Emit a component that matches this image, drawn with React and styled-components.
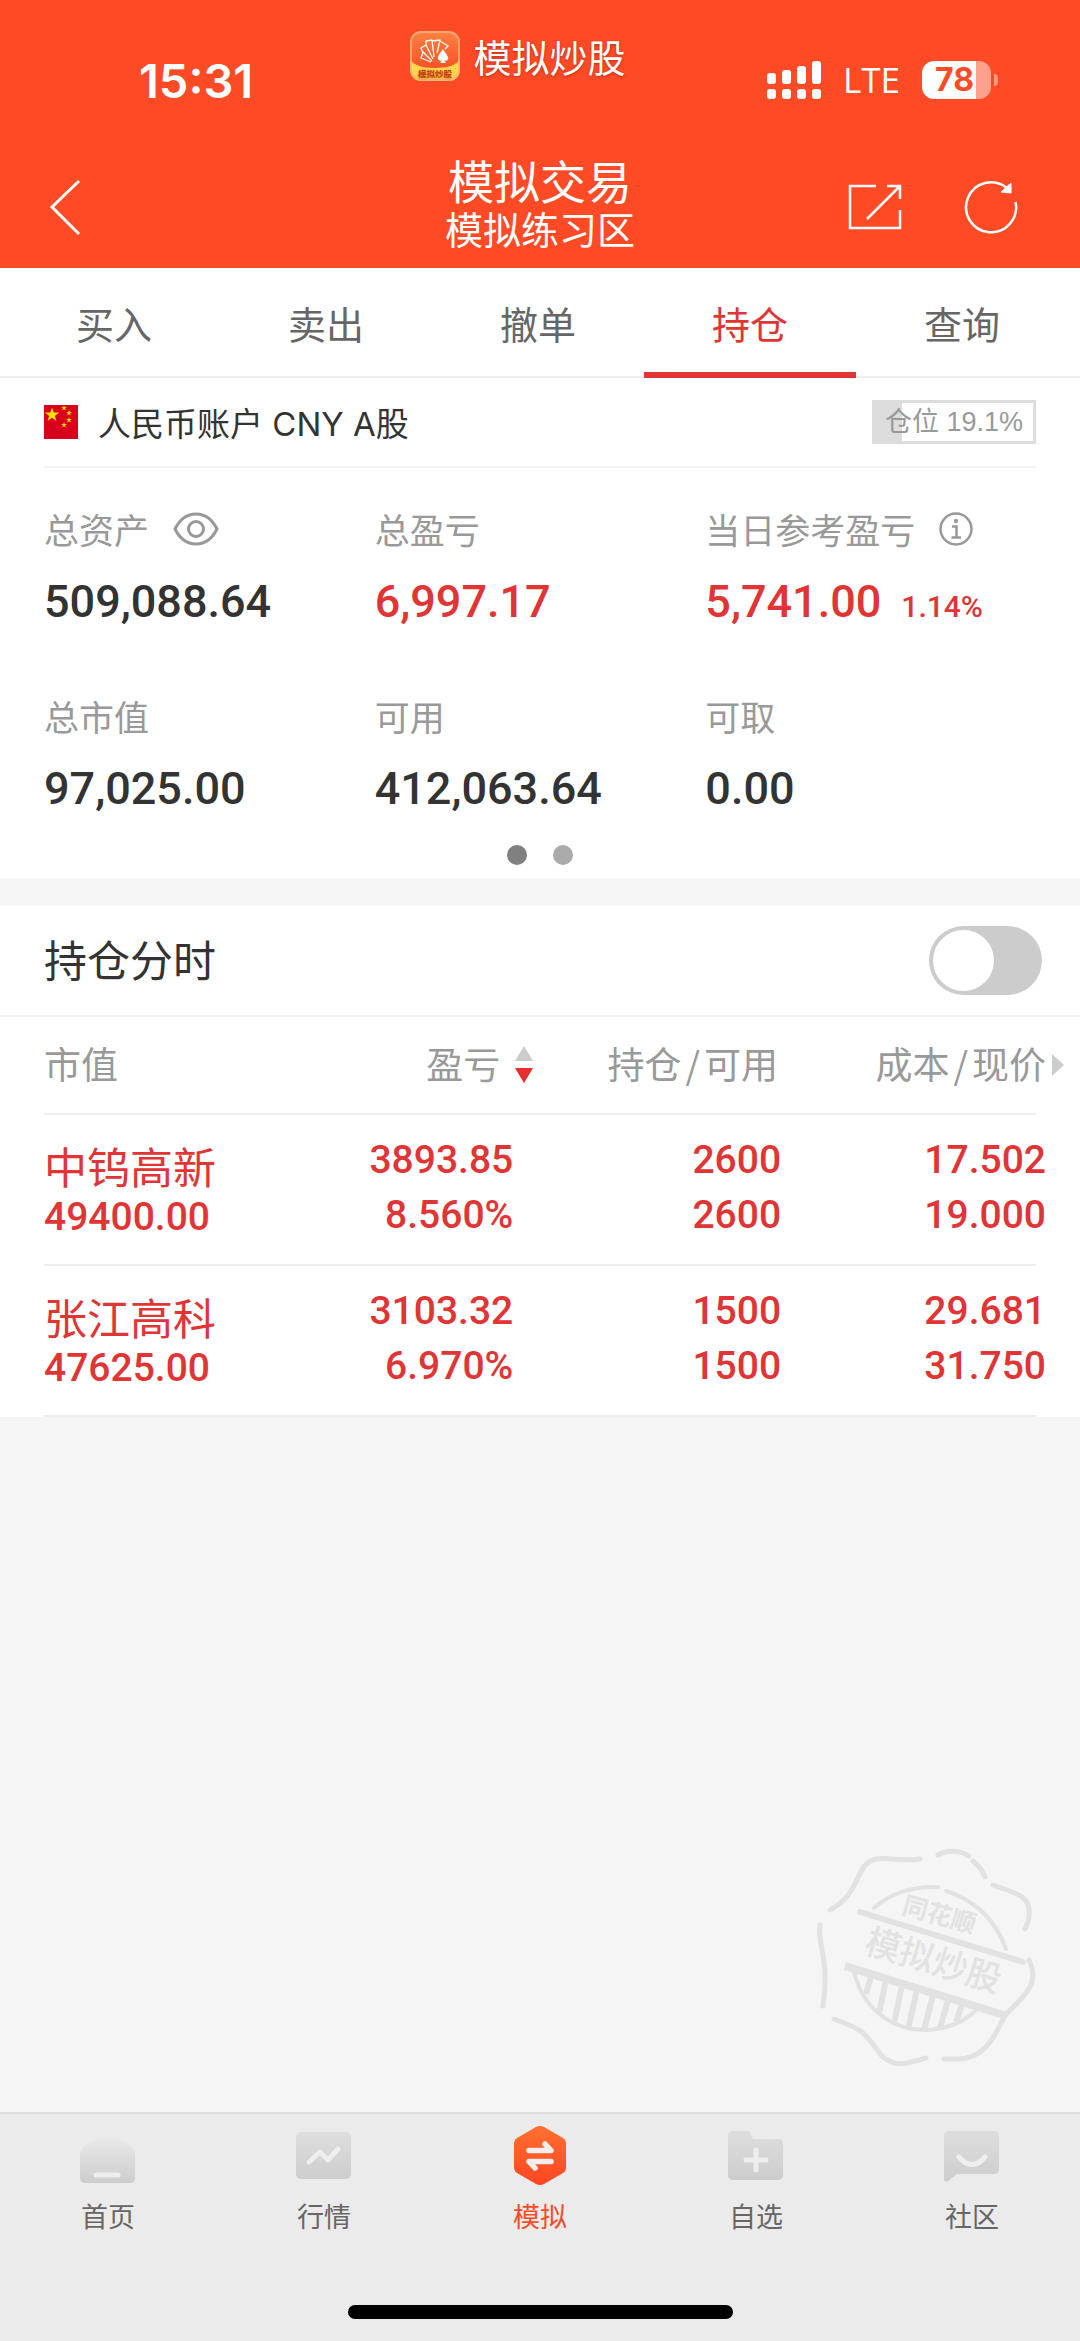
import React from "react";
import styled, { createGlobalStyle } from "styled-components";

const RED = "#e13434";
const BRAND = "#ff4a26";
const CJK = `"Noto Sans CJK SC", sans-serif`;

const GlobalStyle = createGlobalStyle`
  * { box-sizing: border-box; }
  body { margin: 0; background: #f5f5f5; font-family: "Liberation Sans", ${CJK}; color: #333; }
  button { appearance: none; border: 0; padding: 0; background: none; font: inherit; color: inherit; cursor: pointer; }
  svg { display: block; }
`;

const Screen = styled.div`
  min-height: 100vh;
  display: flex;
  flex-direction: column;
`;

const Header = styled.header`
  background: ${BRAND};
  color: #fff;
  padding: 0 46px;
`;

const StatusBar = styled.div`
  height: 140px;
  display: grid;
  grid-template-columns: 1fr auto 1fr;
`;

const Clock = styled.time`
  font: 600 47px/56px Inter, sans-serif;
  padding: 53px 0 0 93px;
`;

const AppBadge = styled.div`
  display: flex;
  align-items: center;
  gap: 13px;
  height: 52px;
  margin: 30px 44px 0 0;
  font: 400 38px/52px ${CJK};
  text-shadow: 0 1px 3px rgba(120, 20, 0, 0.5);
`;

const Signals = styled.div`
  display: flex;
  justify-content: flex-end;
  align-items: center;
  gap: 22px;
  height: 40px;
  margin-top: 60px;
  padding-right: 36px;
  font: 500 35px/40px "Open Sans", sans-serif;
`;

const Battery = styled.div`
  display: flex;
  align-items: center;
  gap: 3px;
  &::after {
    content: "";
    width: 4px;
    height: 12px;
    border-radius: 0 4px 4px 0;
    background: #ff9a85;
  }
`;

const BatteryLevel = styled.div`
  width: 69px;
  height: 38px;
  border-radius: 12px;
  background: linear-gradient(90deg, #fff 78%, #ffa18d 78%);
  color: ${BRAND};
  font: 700 32px/38px Inter, sans-serif;
  text-align: center;
  padding-right: 4px;
`;

const TitleBar = styled.div`
  height: 128px;
  padding-top: 6px;
  display: grid;
  grid-template-columns: 1fr auto 1fr;
  align-items: center;
`;

const Title = styled.h1`
  margin: 0;
  padding-top: 8px;
  font: 400 46px/50px ${CJK};
  text-align: center;
  align-self: start;
`;

const Subtitle = styled.div`
  font-size: 38px;
  line-height: 48px;
`;

const BackButton = styled.button`
  justify-self: start;
`;

const Actions = styled.div`
  display: flex;
  justify-content: flex-end;
  align-items: center;
  gap: 61px;
  padding-right: 15px;
`;

const Tabs = styled.nav`
  display: grid;
  grid-template-columns: repeat(5, 1fr);
  padding: 0 12px 0 8px;
  background: #fff;
  border-bottom: 2px solid #eee;
`;

const Tab = styled.button`
  height: 110px;
  margin-bottom: -2px;
  font: 400 38px/108px ${CJK};
  text-align: center;
  color: ${(p) => (p.$active ? RED : "#666")};
  box-shadow: ${(p) => (p.$active ? `inset 0 -6px ${RED}` : "none")};
`;

const Account = styled.section`
  background: #fff;
  padding: 0 44px;
`;

const AccountHead = styled.div`
  display: flex;
  align-items: center;
  height: 90px;
  border-bottom: 2px solid #f2f2f2;
`;

const AccountName = styled.h2`
  margin: 0 auto 0 20px;
  padding-top: 4px;
  font: 400 33px/48px Inter, ${CJK};
`;

const Position = styled.div`
  height: 44px;
  padding: 0 10px;
  border: 3px solid #ddd;
  background: linear-gradient(90deg, #ddd 17%, #fff 17%);
  color: #999;
  font: 400 27px/38px "Liberation Sans", ${CJK};
`;

const Stats = styled.dl`
  display: grid;
  grid-template-columns: repeat(3, 1fr);
  row-gap: 57px;
  margin: 0;
  padding-top: 37px;
`;

const StatLabel = styled.dt`
  display: flex;
  align-items: center;
  gap: 24px;
  height: 48px;
  font: 400 35px/48px ${CJK};
  color: #999;
  white-space: nowrap;
`;

const StatValue = styled.dd`
  margin: 21px 0 0;
  font: 500 45px/56px Roboto, sans-serif;
  color: ${(p) => (p.$up ? RED : "#333")};
  white-space: nowrap;
`;

const Percent = styled.span`
  margin-left: 20px;
  font-size: 30px;
`;

const Dots = styled.div`
  display: flex;
  justify-content: center;
  gap: 26px;
  padding: 28px 0 13px;
`;

const Dot = styled.span`
  width: 20px;
  height: 20px;
  border-radius: 50%;
  background: ${(p) => (p.$on ? "#808080" : "#aaa")};
`;

const Holdings = styled.section`
  margin-top: 28px;
  background: #fff;
`;

const SwitchRow = styled.label`
  display: flex;
  align-items: center;
  justify-content: space-between;
  height: 111px;
  padding: 0 38px 0 44px;
  border-bottom: 2px solid #f2f2f2;
  font: 400 43px/64px ${CJK};
`;

const SwitchText = styled.span`
  padding-bottom: 6px;
`;

const Switch = styled.input`
  appearance: none;
  width: 113px;
  height: 69px;
  margin: 0;
  padding: 4px;
  border-radius: 35px;
  background: #ccc;
  &::before {
    content: "";
    display: block;
    width: 61px;
    height: 61px;
    border-radius: 50%;
    background: #fff;
  }
  &:checked { background: ${RED}; }
  &:checked::before { margin-left: auto; }
`;

const TableWrap = styled.div`
  padding: 0 44px;
`;

const Table = styled.table`
  width: 100%;
  table-layout: fixed;
  border-collapse: collapse;
`;

const Row = styled.tr`
  border-bottom: 2px solid #eee;
`;

const Th = styled.th`
  height: 97px;
  padding: 0;
  font: 400 37px/54px ${CJK};
  color: #999;
  white-space: nowrap;
`;

const ThInner = styled.div`
  display: flex;
  align-items: center;
  justify-content: ${(p) => (p.$left ? "flex-start" : "flex-end")};
  gap: ${(p) => p.$gap || 0}px;
  margin-right: ${(p) => p.$out || 0}px;
`;

const ThText = styled.span`
  padding-bottom: 5px;
`;

const Slash = styled.span`
  padding: 0 4px;
`;

const Td = styled.td`
  height: 151px;
  padding: 18px 0 0;
  vertical-align: top;
  text-align: ${(p) => (p.$left ? "left" : "right")};
  font: 500 39px/55px Roboto, sans-serif;
  color: ${RED};
  white-space: nowrap;
`;

const Figures = styled.div`
  margin-right: ${(p) => p.$out || 0}px;
`;

const StockName = styled.div`
  padding-top: 6px;
  font: 400 43px/52px ${CJK};
`;

const StockValue = styled.div`
  line-height: 52px;
`;

const Blank = styled.div`
  flex: 1;
  display: flex;
  justify-content: flex-end;
  align-items: flex-end;
  padding: 0 40px 40px;
`;

const BottomNav = styled.nav`
  height: 229px;
  background: #ebebeb;
  border-top: 2px solid #ddd;
`;

const NavItems = styled.div`
  display: grid;
  grid-template-columns: repeat(5, 1fr);
`;

const NavItem = styled.button`
  display: flex;
  flex-direction: column;
  align-items: center;
  padding-top: 10px;
  gap: 8px;
  font: 400 27px/40px ${CJK};
  color: ${(p) => (p.$active ? BRAND : "#666")};
`;

const HomeIndicator = styled.div`
  width: 385px;
  height: 14px;
  margin: 69px auto 0;
  border-radius: 7px;
  background: #000;
`;

const AppIcon = () => (
  <svg width="50" height="50" viewBox="0 0 50 50">
    <defs>
      <clipPath id="appClip"><rect width="50" height="50" rx="11" /></clipPath>
      <linearGradient id="appFill" x1="0" y1="0" x2="0" y2="1">
        <stop offset="0" stopColor="#ff8243" /><stop offset="1" stopColor="#f4431c" />
      </linearGradient>
    </defs>
    <g clipPath="url(#appClip)">
      <rect width="50" height="50" fill="url(#appFill)" />
      <path d="M0 28Q5 37 25 37T50 28V50H0Z" fill="#ffd84a" />
      <rect x="1" y="1" width="48" height="48" rx="10" fill="none" stroke="#ffb27e" strokeWidth="2" opacity=".8" />
    </g>
    <g fill="none" stroke="#fff" strokeWidth="1.3" strokeLinejoin="round">
      <path d="M21 31L11 27L13 21L22 30M13 22L11 17L16 14L23 28M16 15L16 10L22 9L24 26M22 10L30 9L27 22M30 10L38 15L35 18" />
    </g>
    <path d="M33 18C31 22 27 24 28 28C29 30 31 30 32 29L30 32H36L34 29C36 31 39 29 38 26C37 23 34 21 33 18Z" fill="#fff" />
    <text x="25" y="46" textAnchor="middle" fontSize="8.5" fontWeight="700" fill="#c2380f" fontFamily="Noto Sans CJK SC">模拟炒股</text>
  </svg>
);

const SignalIcon = () => (
  <svg width="54" height="38" viewBox="0 0 54 38" fill="#fff">
    {[12, 9, 5, 0].map((y, i) => (
      <g key={y}>
        <rect x={i * 15} y={y} width="9" height={23 - y} rx="3" />
        <rect x={i * 15} y="28" width="9" height="10" rx="3" />
      </g>
    ))}
  </svg>
);

const BackIcon = () => (
  <svg width="36" height="60" viewBox="0 0 36 60" fill="none" stroke="#fff" strokeWidth="3">
    <path d="M33 4L6 30L33 57" />
  </svg>
);

const ShareIcon = () => (
  <svg width="54" height="46" viewBox="0 0 54 46" fill="none" stroke="#fff" strokeWidth="2.5">
    <path d="M28 2H2V44H52V26M39 2H52V15M52 2L19 35" />
  </svg>
);

const RefreshIcon = () => (
  <svg width="56" height="56" viewBox="0 0 56 56" fill="none" stroke="#fff" strokeWidth="2.5">
    <path d="M52.5 23A25 25 0 1 1 44 9" />
    <path d="M48 4L48 14L38 13Z" fill="#fff" strokeWidth="1" />
  </svg>
);

const STAR = "M0-5L1.2-1.6H4.8L1.9.6L3 4L0 1.9L-3 4L-1.9.6L-4.8-1.6H-1.2Z";
const FlagIcon = () => (
  <svg width="34" height="34" viewBox="0 0 34 34">
    <rect width="34" height="34" fill="#d8001b" />
    <g fill="#ffe000">
      <path d={STAR} transform="translate(8 10) scale(1.5)" />
      <path d={STAR} transform="translate(20 3) scale(.6)" />
      <path d={STAR} transform="translate(25 8) scale(.6)" />
      <path d={STAR} transform="translate(25 15) scale(.6)" />
      <path d={STAR} transform="translate(20 20) scale(.6)" />
    </g>
  </svg>
);

const EyeIcon = () => (
  <svg width="46" height="34" viewBox="0 0 46 34" fill="none" stroke="#999" strokeWidth="3">
    <path d="M2 17C12-3 34-3 44 17C34 37 12 37 2 17Z" />
    <circle cx="23" cy="17" r="7.5" />
  </svg>
);

const InfoIcon = () => (
  <svg width="34" height="34" viewBox="0 0 34 34" fill="none" stroke="#999" strokeWidth="2.5">
    <circle cx="17" cy="17" r="15.5" />
    <path d="M13 14.5H17.5V25M12.5 25.5H22" />
    <circle cx="17" cy="9" r="2.2" fill="#999" stroke="none" />
  </svg>
);

const SortIcon = () => (
  <svg width="20" height="38" viewBox="0 0 20 38">
    <path d="M10 0L19 15H1Z" fill="#ccc" />
    <path d="M10 37L19 22H1Z" fill="#ea2d2d" />
  </svg>
);

const MoreIcon = () => (
  <svg width="12" height="22" viewBox="0 0 12 22">
    <path d="M0 0L12 11L0 22Z" fill="#ccc" />
  </svg>
);

const Stamp = () => (
  <svg width="226" height="226" viewBox="0 0 226 226" fill="none" stroke="#e2e2e2" strokeWidth="5" strokeLinecap="round">
    <path d="M16 64C49 46 40 18 62 13C75 11 90 16 106 13" />
    <path d="M124 9C135 3 147 5 155 10M159 15Q167 21 171 31" />
    <path d="M179 39C199 47 217 48 215 69Q215 75 211 83" />
    <path d="M215 114C224 134 218 144 192 168C181 187 174 212 144 213H130" />
    <path d="M20 173C50 184 50 186 67 209C82 224 97 216 112 212" />
    <path d="M6 79C3 101 16 111 9 160" />
    <path d="M60 62Q84 40 124 41M132 45Q176 59 192 103" strokeWidth="4" />
    <path d="M46 66L209 116" strokeWidth="6" />
    <path d="M31 120L193 170" strokeWidth="8" strokeLinecap="butt" />
    <path d="M40 126C52 172 88 185 113 184Q144 182 161 165" strokeWidth="4" />
    <path d="M57 130L52 148M72 134L65 167M88 139L80 178M103 144L94 183M119 149L110 184M134 154L126 182M148 158L142 176" strokeWidth="6" strokeLinecap="butt" />
    <g fill="#e2e2e2" stroke="none" fontFamily="Noto Sans CJK SC">
      <text transform="translate(87 67) rotate(16)" fontSize="25" fontWeight="700">同花顺</text>
      <text transform="translate(49 106) rotate(17)" fontSize="35" fontWeight="500">模拟炒股</text>
    </g>
  </svg>
);

const NavIcon = ({ children }) => (
  <svg width="64" height="64" viewBox="0 0 64 64">
    <defs>
      <linearGradient id="navGrey" x1="0" y1="0" x2="0" y2="1">
        <stop offset="0" stopColor="#dedede" /><stop offset="1" stopColor="#cdcdcd" />
      </linearGradient>
      <linearGradient id="navHome" x1="0" y1="0" x2="0" y2="1">
        <stop offset="0" stopColor="#ebebeb" /><stop offset="1" stopColor="#cdcdcd" />
      </linearGradient>
      <linearGradient id="navHot" x1="0" y1="0" x2="0" y2="1">
        <stop offset="0" stopColor="#ff7030" /><stop offset="1" stopColor="#ff4522" />
      </linearGradient>
    </defs>
    {children}
  </svg>
);

const stats = [
  { label: "总资产", value: "509,088.64", icon: <EyeIcon /> },
  { label: "总盈亏", value: "6,997.17", up: true },
  { label: "当日参考盈亏", value: "5,741.00", up: true, percent: "1.14%", icon: <InfoIcon /> },
  { label: "总市值", value: "97,025.00" },
  { label: "可用", value: "412,063.64" },
  { label: "可取", value: "0.00" },
];

const stocks = [
  { name: "中钨高新", value: "49400.00", profit: ["3893.85", "8.560%"], held: ["2600", "2600"], price: ["17.502", "19.000"] },
  { name: "张江高科", value: "47625.00", profit: ["3103.32", "6.970%"], held: ["1500", "1500"], price: ["29.681", "31.750"] },
];

const navItems = [
  {
    label: "首页",
    icon: (
      <>
        <path d="M4 30Q4 25 9 22L26 12Q32 9 38 12L54 22Q59 25 59 30V54Q59 59 54 59H9Q4 59 4 54Z" fill="url(#navHome)" />
        <path d="M20 51H42" stroke="#eee" strokeWidth="5" strokeLinecap="round" />
      </>
    ),
  },
  {
    label: "行情",
    icon: (
      <>
        <rect x="4" y="8" width="55" height="47" rx="5" fill="url(#navGrey)" />
        <path d="M17 38L28 28L36 36L46 25" fill="none" stroke="#eee" strokeWidth="5" strokeLinejoin="round" strokeLinecap="round" />
      </>
    ),
  },
  {
    label: "模拟",
    active: true,
    icon: (
      <>
        <path d="M28 3Q32 1 36 3L55 14Q58 16 58 20V43Q58 47 55 49L36 60Q32 62 28 60L9 49Q6 47 6 43V20Q6 16 9 14Z" fill="url(#navHot)" />
        <path d="M21 26.500H43L37 20M43 37.500H21L27 44" fill="none" stroke="#f3eeec" strokeWidth="5.500" strokeLinejoin="round" strokeLinecap="round" />
      </>
    ),
  },
  {
    label: "自选",
    icon: (
      <>
        <path d="M4 12Q4 7 9 7H23Q26 7 27 10L29 15H54Q59 15 59 20V51Q59 56 54 56H9Q4 56 4 51Z" fill="url(#navGrey)" />
        <path d="M32 26V46M22 36H42" stroke="#eee" strokeWidth="5" strokeLinecap="round" />
      </>
    ),
  },
  {
    label: "社区",
    icon: (
      <>
        <path d="M4 12Q4 7 9 7H54Q59 7 59 12V45Q59 50 54 50H17L8 57Q4 59 4 55Z" fill="url(#navGrey)" />
        <path d="M19 33Q32 48 45 33" fill="none" stroke="#eee" strokeWidth="5" strokeLinecap="round" />
      </>
    ),
  },
];

export default function App() {
  return (
    <Screen>
      <GlobalStyle />
      <Header>
        <StatusBar>
          <Clock>15:31</Clock>
          <AppBadge><AppIcon />模拟炒股</AppBadge>
          <Signals>
            <SignalIcon />
            <span>LTE</span>
            <Battery><BatteryLevel>78</BatteryLevel></Battery>
          </Signals>
        </StatusBar>
        <TitleBar>
          <BackButton aria-label="返回"><BackIcon /></BackButton>
          <Title>模拟交易<Subtitle>模拟练习区</Subtitle></Title>
          <Actions>
            <button aria-label="分享"><ShareIcon /></button>
            <button aria-label="刷新"><RefreshIcon /></button>
          </Actions>
        </TitleBar>
      </Header>
      <Tabs>
        {["买入", "卖出", "撤单", "持仓", "查询"].map((t) => (
          <Tab key={t} $active={t === "持仓"}>{t}</Tab>
        ))}
      </Tabs>
      <Account>
        <AccountHead>
          <FlagIcon />
          <AccountName>人民币账户 CNY A股</AccountName>
          <Position>仓位 19.1%</Position>
        </AccountHead>
        <Stats>
          {stats.map((s) => (
            <div key={s.label}>
              <StatLabel>{s.label}{s.icon}</StatLabel>
              <StatValue $up={s.up}>
                {s.value}
                {s.percent && <Percent>{s.percent}</Percent>}
              </StatValue>
            </div>
          ))}
        </Stats>
        <Dots><Dot $on /><Dot /></Dots>
      </Account>
      <Holdings>
        <SwitchRow>
          <SwitchText>持仓分时</SwitchText>
          <Switch type="checkbox" role="switch" />
        </SwitchRow>
        <TableWrap>
          <Table>
            <colgroup>
              <col style={{ width: "20%" }} />
              <col />
              <col style={{ width: "27%" }} />
              <col style={{ width: "26%" }} />
            </colgroup>
            <thead>
              <Row>
                <Th><ThInner $left><ThText>市值</ThText></ThInner></Th>
                <Th><ThInner $gap={14} $out={-24}><ThText>盈亏</ThText><SortIcon /></ThInner></Th>
                <Th><ThInner><ThText>持仓<Slash>/</Slash>可用</ThText></ThInner></Th>
                <Th><ThInner $gap={6} $out={-28}><ThText>成本<Slash>/</Slash>现价</ThText><MoreIcon /></ThInner></Th>
              </Row>
            </thead>
            <tbody>
              {stocks.map((s) => (
                <Row key={s.name}>
                  <Td $left>
                    <StockName>{s.name}</StockName>
                    <StockValue>{s.value}</StockValue>
                  </Td>
                  <Td>{s.profit.map((v, i) => <Figures key={i} $out={-3}>{v}</Figures>)}</Td>
                  <Td>{s.held.map((v, i) => <Figures key={i} $out={-3}>{v}</Figures>)}</Td>
                  <Td>{s.price.map((v, i) => <Figures key={i} $out={-10}>{v}</Figures>)}</Td>
                </Row>
              ))}
            </tbody>
          </Table>
        </TableWrap>
      </Holdings>
      <Blank><Stamp /></Blank>
      <BottomNav>
        <NavItems>
          {navItems.map((n) => (
            <NavItem key={n.label} $active={n.active}>
              <NavIcon>{n.icon}</NavIcon>
              {n.label}
            </NavItem>
          ))}
        </NavItems>
        <HomeIndicator />
      </BottomNav>
    </Screen>
  );
}
